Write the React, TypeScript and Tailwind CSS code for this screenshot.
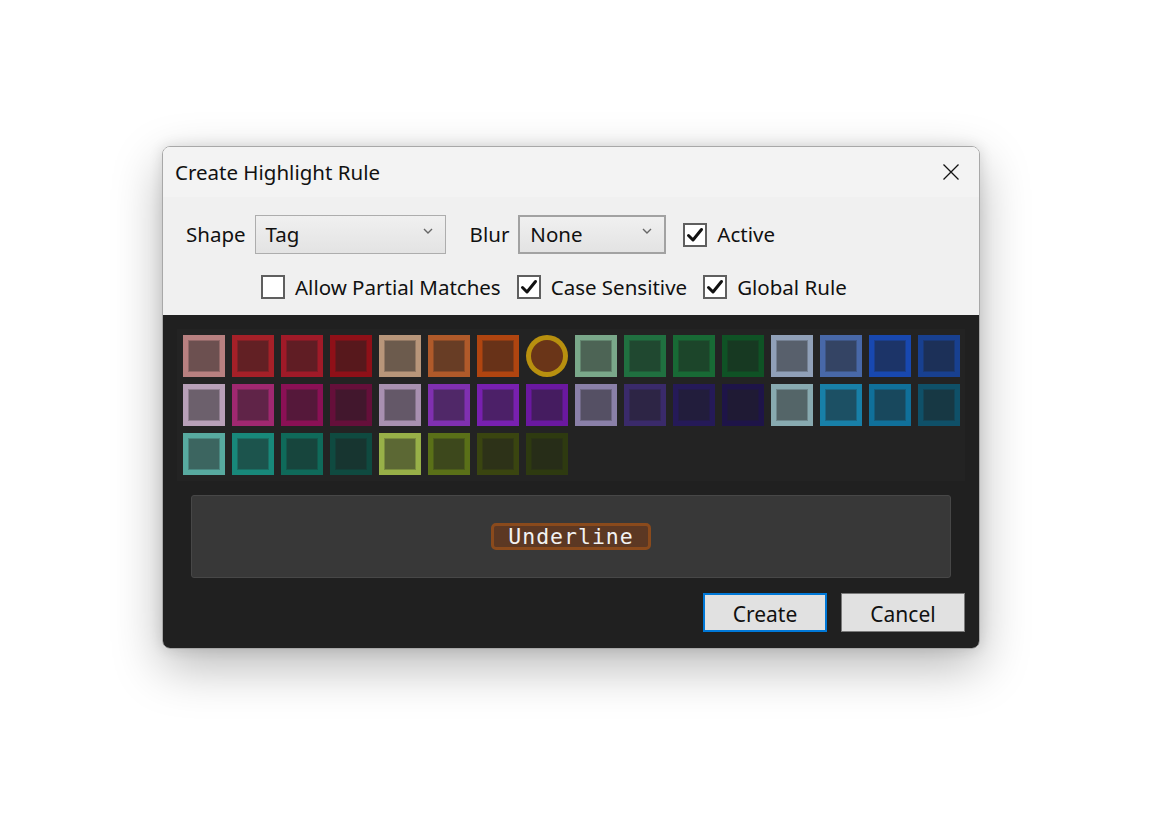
import React from "react";

const swatches: string[] = [
  "#b88080", "#a52028", "#a01a28", "#8f1018", "#b8967a", "#b05a2a", "#b04510", "#8b4513",
  "#7aa88a", "#207040", "#186a35", "#0f5225", "#90a0b8", "#4868a8", "#1848b0", "#184090",
  "#b8a0b8", "#a02870", "#8a1055", "#650f3a", "#a890b0", "#8030b0", "#7820b0", "#6a18a0",
  "#8a80a8", "#3a2a6a", "#251a58", "#1e1448", "#88aab0", "#1880a8", "#10709a", "#0f5068",
  "#58aaa0", "#18887a", "#0f6a5a", "#0f4a40", "#98b048", "#5a7018", "#3a4510", "#2e3a10",
];

const SELECTED = 7;

const Swatch: React.FC<{ color: string; selected: boolean }> = ({ color, selected }) => {
  if (selected) {
    return (
      <div className="w-[42px] h-[42px] rounded-full bg-[#b8900f] flex items-center justify-center">
        <div className="w-[32px] h-[32px] rounded-full bg-[#6a3518]" />
      </div>
    );
  }
  return (
    <div className="w-[42px] h-[42px] flex items-center justify-center" style={{ backgroundColor: color }}>
      <div className="w-[32px] h-[32px] bg-clip-padding border border-[rgba(32,32,32,0.25)] bg-[rgba(32,32,32,0.5)]" />
    </div>
  );
};

const Check: React.FC<{ checked: boolean; label: string }> = ({ checked, label }) => (
  <label className="flex items-center gap-[10px]">
    <span className="w-[24px] h-[24px] border-2 border-[#5f5f5f] bg-white flex items-center justify-center">
      {checked && (
        <svg width="18" height="18" viewBox="0 0 18 18">
          <path d="M2.5 9.5 L7 14 L15.5 3.5" fill="none" stroke="#111" strokeWidth="3" strokeLinecap="round" strokeLinejoin="round" />
        </svg>
      )}
    </span>
    <span>{label}</span>
  </label>
);

const Combo: React.FC<{ value: string; width: string; thick?: boolean }> = ({ value, width, thick }) => (
  <div
    className={`${width} h-[39px] flex items-center justify-between pl-[10px] pr-[12px] bg-gradient-to-b from-[#f0f0f0] to-[#e3e3e3] ${
      thick ? "border-2 border-[#a2a2a2]" : "border border-[#adadad]"
    }`}
  >
    <span>{value}</span>
    <svg width="10" height="8" viewBox="0 0 10 8" className="mb-[8px]">
      <path d="M1 2 L5 6 L9 2" fill="none" stroke="#666" strokeWidth="1.4" />
    </svg>
  </div>
);

export default function App() {
  return (
    <div className="w-[1157px] h-[816px] bg-white pt-[146px] pl-[162px] font-['Noto_Sans',sans-serif] text-[20.5px] text-[#111]">
      <div className="w-[818px] h-[503px] rounded-[8px] border border-[#a8a8a8] overflow-hidden flex flex-col shadow-[0_18px_50px_rgba(0,0,0,0.28),0_0_14px_rgba(0,0,0,0.12)]">
        <div className="h-[50px] bg-[#f3f3f3] flex items-center justify-between pl-[12px] pr-[19px]">
          <span className="text-[20.5px]">Create Highlight Rule</span>
          <svg width="18" height="18" viewBox="0 0 18 18">
            <path d="M1.5 1.5 L16.5 16.5 M16.5 1.5 L1.5 16.5" stroke="#111" strokeWidth="1.3" />
          </svg>
        </div>
        <div className="h-[118px] bg-[#f0f0f0] flex flex-col pt-[18px]">
          <div className="flex items-center pl-[23px]">
            <span className="mr-[9px]">Shape</span>
            <Combo value="Tag" width="w-[191px]" />
            <span className="ml-[24px] mr-[9px]">Blur</span>
            <Combo value="None" width="w-[148px]" thick />
            <div className="ml-[17px]">
              <Check checked label="Active" />
            </div>
          </div>
          <div className="flex items-center pl-[98px] mt-[18px] gap-[16px]">
            <Check checked={false} label="Allow Partial Matches" />
            <Check checked label="Case Sensitive" />
            <Check checked label="Global Rule" />
          </div>
        </div>
        <div className="flex-1 bg-[#202020] flex flex-col pt-[14px] px-[14px]">
          <div className="bg-[#232323] p-[6px] grid grid-cols-[repeat(16,42px)] gap-[7px]">
            {swatches.map((c, i) => (
              <Swatch key={i} color={c} selected={i === SELECTED} />
            ))}
          </div>
          <div className="mx-[14px] mt-[14px] h-[83px] bg-[#383838] border border-[#474747] rounded-[3px] flex items-center justify-center">
            <div className="h-[27px] rounded-[5px] border-[3px] border-[#8a4a1c] bg-[#5c3823] flex items-center px-[14px]">
              <span className="font-['DejaVu_Sans_Mono',monospace] text-[21.5px] tracking-[1px] text-[#f2f2f2] leading-none">
                Underline
              </span>
            </div>
          </div>
          <div className="flex justify-end gap-[14px] mt-[15px]">
            <button className="w-[124px] h-[39px] pt-[4px] bg-[#e1e1e1] border-2 border-[#0078d7] text-[21px]">Create</button>
            <button className="w-[124px] h-[39px] pt-[4px] bg-[#e1e1e1] border border-[#7a7a7a] text-[21px]">Cancel</button>
          </div>
        </div>
      </div>
    </div>
  );
}
